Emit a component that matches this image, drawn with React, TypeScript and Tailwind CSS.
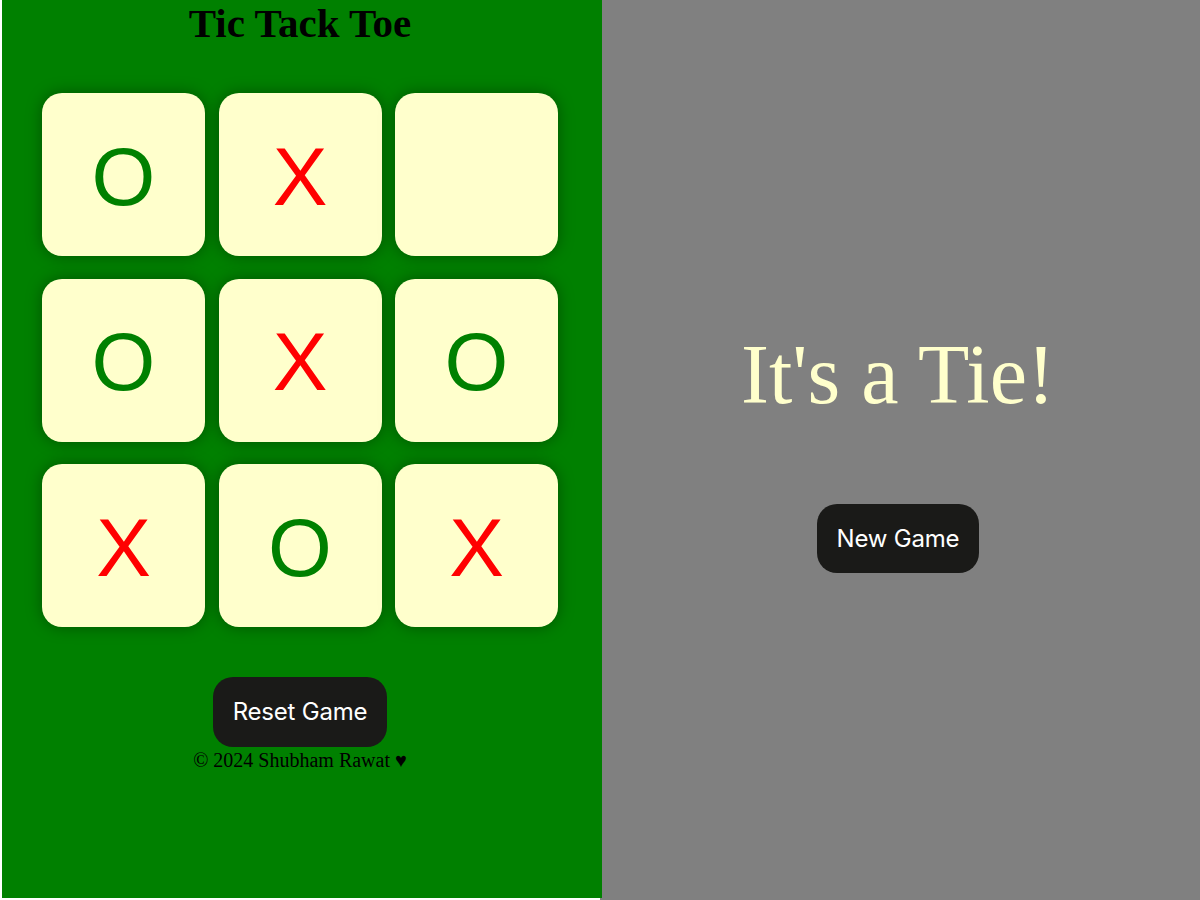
import React from 'react';

type Mark = 'X' | 'O' | null;

const board: Mark[] = ['O', 'X', null, 'O', 'X', 'O', 'X', 'O', 'X'];

function Cell({ value }: { value: Mark }) {
  return (
    <button
      className={`w-[163px] h-[163px] rounded-[20px] bg-[#ffffcc] shadow-[0_0_16px_rgba(0,0,0,0.35)] flex items-center justify-center text-[82px] leading-none font-['Liberation_Sans',Arial,sans-serif] ${
        value === 'X' ? 'text-[#ff0000]' : 'text-[#008000]'
      }`}
    >
      <span className="pt-[4px]">{value}</span>
    </button>
  );
}

export default function App() {
  return (
    <div className="relative w-[1200px] h-[900px] bg-white overflow-hidden">
      <div className="relative z-10 ml-[2px] w-[600px] h-[898px] bg-[#008000] pr-[4px] flex flex-col items-center font-['Liberation_Serif','Times_New_Roman',serif]">
        <h1 className="text-[41px] font-bold leading-[46px] text-black m-0">Tic Tack Toe</h1>
        <div className="mt-[47px] grid grid-cols-3 gap-x-[13.5px] gap-y-[22.5px]">
          {board.map((v, i) => (
            <Cell key={i} value={v} />
          ))}
        </div>
        <button className="mt-[50px] px-5 py-5 rounded-[20px] bg-[#1a1a18] text-white text-[24px] leading-[30px] tracking-[-0.2px] font-['Inter',sans-serif]">
          Reset Game
        </button>
        <p className="mt-[2px] text-[20px] leading-[23px] text-black">© 2024 Shubham Rawat ♥</p>
      </div>

      <div className="absolute top-0 left-[600px] w-[600px] h-[900px] bg-[#808080] pr-[4px] flex flex-col items-center justify-center">
        <h2 className="text-[84px] leading-[94px] font-normal text-[#ffffcc] font-['Liberation_Serif','Times_New_Roman',serif]">
          It's a Tie!
        </h2>
        <button className="mt-[82px] px-5 py-5 rounded-[20px] bg-[#1a1a18] text-white text-[24px] leading-[29px] tracking-[-0.2px] font-['Inter',sans-serif]">
          New Game
        </button>
      </div>
    </div>
  );
}
